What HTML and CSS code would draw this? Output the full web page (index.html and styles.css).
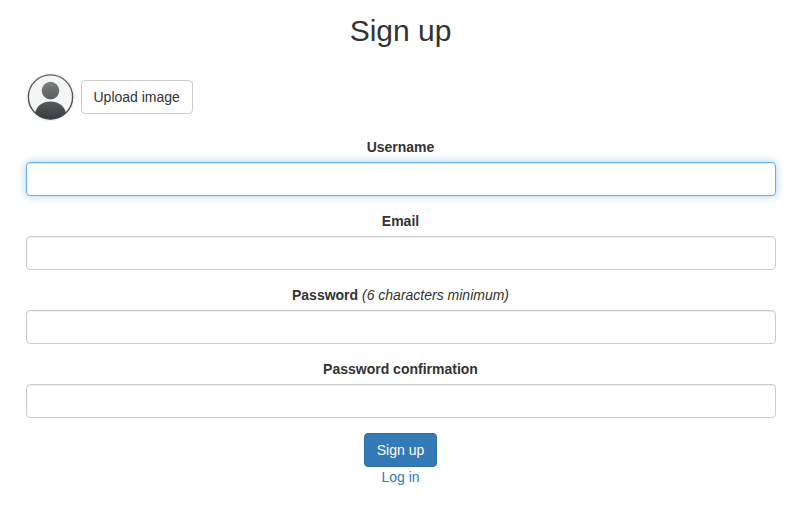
FILE: index.html
```
<!DOCTYPE html>
<html lang="en">
<head>
<meta charset="utf-8">
<title>Sign up</title>
<link rel="stylesheet" href="styles.css">
</head>
<body>
<main class="container">
  <h2 class="title">Sign up</h2>
  <form class="form">
    <div class="upload">
      <svg class="avatar" viewBox="0.5 0 50 50" aria-hidden="true">
        <defs>
          <linearGradient id="person" x1="0" y1="10" x2="0" y2="46" gradientUnits="userSpaceOnUse">
            <stop offset="0" stop-color="#7b7d7c"/>
            <stop offset="1" stop-color="#393e42"/>
          </linearGradient>
          <linearGradient id="ring" x1="0" y1="0" x2="0" y2="1">
            <stop offset="0" stop-color="#636565"/>
            <stop offset="1" stop-color="#45494c"/>
          </linearGradient>
          <clipPath id="disc"><circle cx="25" cy="25" r="22.3"/></clipPath>
        </defs>
        <circle cx="25" cy="25" r="24.2" fill="#f1f1f1"/>
        <circle cx="25" cy="25" r="22.100" fill="#f5f5f5" stroke="url(#ring)" stroke-width="1.4"/>
        <g clip-path="url(#disc)" fill="url(#person)">
          <circle cx="25" cy="18.600" r="8.8"/>
          <path d="M9.500 48V41C11.500 33.500 17 29.600 25 29.600S38.500 33.500 40.500 41V48Z"/>
        </g>
      </svg>
      <button class="btn upload-btn" type="button">Upload image</button>
    </div>
    <div class="field">
      <label for="username">Username</label>
      <input class="input focused" id="username" type="text">
    </div>
    <div class="field">
      <label for="email">Email</label>
      <input class="input" id="email" type="email">
    </div>
    <div class="field">
      <div class="label-row"><label for="password">Password</label> <em>(6 characters minimum)</em></div>
      <input class="input" id="password" type="password">
    </div>
    <div class="field">
      <label for="confirmation">Password confirmation</label>
      <input class="input" id="confirmation" type="password">
    </div>
    <button class="btn primary" type="submit">Sign up</button>
    <a class="login" href="#">Log in</a>
  </form>
</main>
</body>
</html>
```
FILE: styles.css
```
* { box-sizing: border-box; }
body {
  margin: 0;
  background: #fff;
  color: #333;
  font: 14px/20px "Liberation Sans", Arial, sans-serif;
}
.container {
  width: 750px;
  margin-left: 25.5px;
  padding-top: 14px;
  text-align: center;
}
.title {
  margin: 0 0 25px;
  font-size: 30px;
  font-weight: 500;
  line-height: 33px;
}
.form {
  display: flex;
  flex-direction: column;
  align-items: center;
}
.upload {
  display: flex;
  align-items: center;
  align-self: stretch;
  height: 50px;
  margin-bottom: 15px;
}
.avatar { display: block; width: 50px; height: 50px; }
.btn {
  height: 34px;
  padding: 6px 12px;
  border: 1px solid #ccc;
  border-radius: 4px;
  background: #fff;
  color: #333;
  font: inherit;
}
.upload-btn { margin-left: 5px; }
.field { width: 100%; margin-bottom: 15px; }
label { font-weight: 700; }
.field > label, .label-row { display: block; margin-bottom: 5px; }
.input {
  display: block;
  width: 100%;
  height: 34px;
  padding: 6px 12px;
  border: 1px solid #ccc;
  border-radius: 4px;
  background: #fff;
  box-shadow: inset 0 1px 1px rgba(0, 0, 0, .075);
  color: #555;
  font: inherit;
  outline: 0;
}
.input.focused {
  border-color: #66afe9;
  box-shadow: inset 0 1px 1px rgba(0, 0, 0, .075), 0 0 8px rgba(102, 175, 233, .6);
}
.primary { border-color: #2e6da4; background: #337ab7; color: #fff; }
.login { color: #337ab7; text-decoration: none; }
```
